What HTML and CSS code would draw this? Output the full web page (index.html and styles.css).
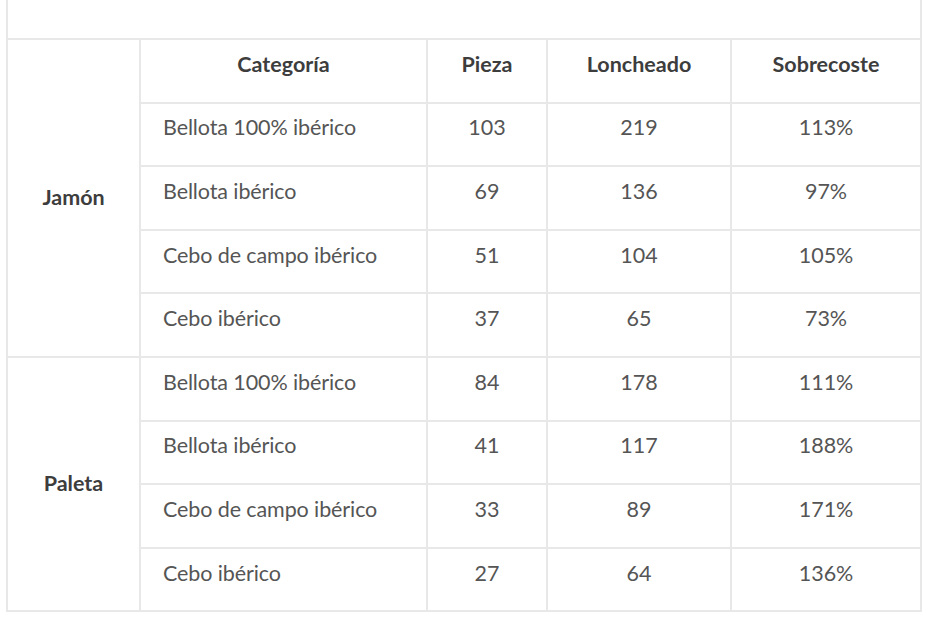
FILE: index.html
```html
<!DOCTYPE html>
<html lang="es">
<head>
<meta charset="utf-8">
<title>Precios jamón y paleta</title>
<link rel="stylesheet" href="styles.css">
</head>
<body>
<div class="wrap">
<table class="prices">
  <colgroup>
    <col class="c-tipo">
    <col class="c-cat">
    <col class="c-pieza">
    <col class="c-lonch">
    <col class="c-sobre">
  </colgroup>
  <tbody>
    <tr class="top-row"><td colspan="5"></td></tr>
    <tr>
      <th rowspan="5" class="group">Jamón</th>
      <th class="head">Categoría</th>
      <th class="head">Pieza</th>
      <th class="head">Loncheado</th>
      <th class="head">Sobrecoste</th>
    </tr>
    <tr><td class="cat">Bellota 100% ibérico</td><td>103</td><td>219</td><td>113%</td></tr>
    <tr><td class="cat">Bellota ibérico</td><td>69</td><td>136</td><td>97%</td></tr>
    <tr><td class="cat">Cebo de campo ibérico</td><td>51</td><td>104</td><td>105%</td></tr>
    <tr><td class="cat">Cebo ibérico</td><td>37</td><td>65</td><td>73%</td></tr>
    <tr><th rowspan="4" class="group">Paleta</th><td class="cat">Bellota 100% ibérico</td><td>84</td><td>178</td><td>111%</td></tr>
    <tr><td class="cat">Bellota ibérico</td><td>41</td><td>117</td><td>188%</td></tr>
    <tr><td class="cat">Cebo de campo ibérico</td><td>33</td><td>89</td><td>171%</td></tr>
    <tr><td class="cat">Cebo ibérico</td><td>27</td><td>64</td><td>136%</td></tr>
  </tbody>
</table>
</div>
</body>
</html>
```

FILE: styles.css
```css
html, body {
  margin: 0;
  padding: 0;
  background: #ffffff;
}

.wrap {
  padding: 0 6px;
}

.prices {
  width: 916px;
  border-collapse: collapse;
  table-layout: fixed;
  font-family: Lato, "Liberation Sans", sans-serif;
  font-size: 21.5px;
  line-height: 1.2;
  color: #555555;
}

.c-tipo { width: 133px; }
.c-cat { width: 287px; }
.c-pieza { width: 120px; }
.c-lonch { width: 184px; }
.c-sobre { width: 190px; }

.prices td,
.prices th {
  border: 2px solid #e8e8e8;
  height: 63.6px;
  padding: 0 10px 12px;
  text-align: center;
  vertical-align: middle;
  font-weight: 400;
  box-sizing: border-box;
}

.prices .top-row td {
  height: 39px;
  padding: 0;
  border-top: 0;
}

.prices th.head,
.prices th.group {
  font-weight: 700;
  color: #3d3d3d;
}

.prices th.group {
  padding-bottom: 1px;
}

.prices td.cat {
  text-align: left;
  padding-left: 22px;
  letter-spacing: -0.1px;
}
```
